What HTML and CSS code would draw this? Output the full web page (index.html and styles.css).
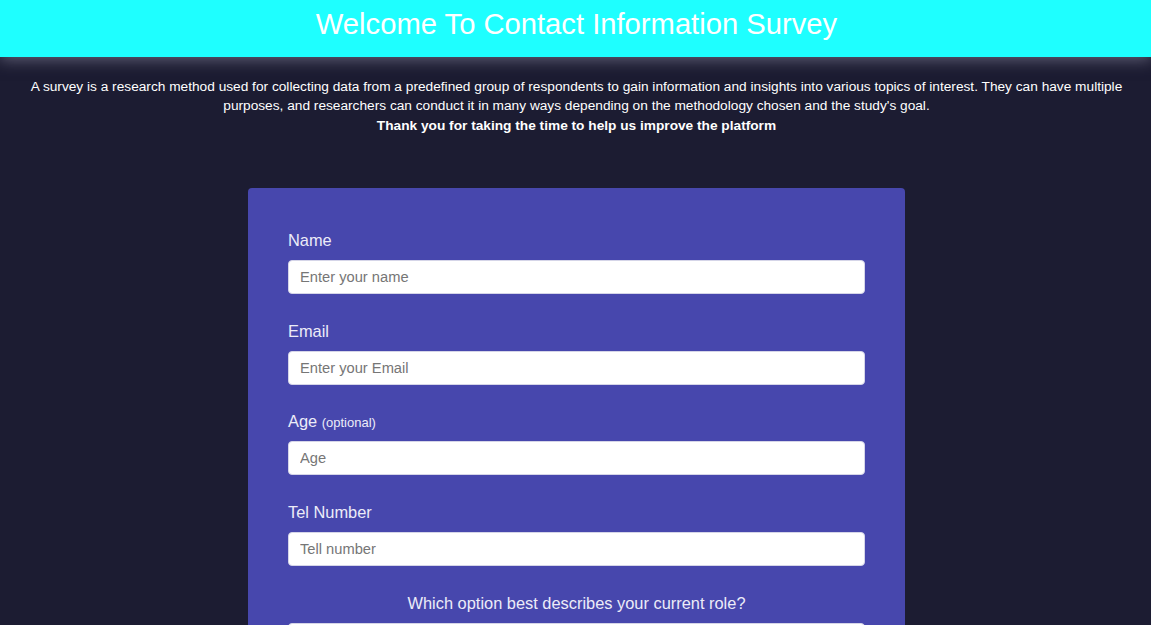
FILE: index.html
```html
<!DOCTYPE html>
<html lang="en">
<head>
<meta charset="utf-8">
<title>Contact Information Survey</title>
<link rel="stylesheet" href="styles.css">
</head>
<body>
<header class="top">
  <h1 class="title">Welcome To Contact Information Survey</h1>
</header>
<main class="page">
  <p class="intro">A survey is a research method used for collecting data from a predefined group of respondents to gain information and insights into various topics of interest. They can have multiple purposes, and researchers can conduct it in many ways depending on the methodology chosen and the study's goal.<br><strong>Thank you for taking the time to help us improve the platform</strong></p>
  <form class="card">
    <div class="field">
      <label class="label" for="name">Name</label>
      <input class="input" id="name" type="text" placeholder="Enter your name">
    </div>
    <div class="field">
      <label class="label" for="email">Email</label>
      <input class="input" id="email" type="email" placeholder="Enter your Email">
    </div>
    <div class="field">
      <label class="label" for="age">Age <span class="opt">(optional)</span></label>
      <input class="input" id="age" type="number" placeholder="Age">
    </div>
    <div class="field">
      <label class="label" for="tel">Tel Number</label>
      <input class="input" id="tel" type="tel" placeholder="Tell number">
    </div>
    <div class="field">
      <label class="label center" for="role">Which option best describes your current role?</label>
      <select class="input" id="role">
        <option>Select current role</option>
      </select>
    </div>
  </form>
</main>
</body>
</html>
```

FILE: styles.css
```css
* { box-sizing: border-box; }
html, body {
  margin: 0;
  padding: 0;
}
body {
  background: #1c1c32;
  font-family: "Liberation Sans", Arial, sans-serif;
  color: #ffffff;
  min-height: 100vh;
}
.top {
  background: #1effff;
  height: 57px;
  display: flex;
  align-items: center;
  justify-content: center;
  box-shadow: 0 3px 14px rgba(150, 150, 170, 0.55);
  position: relative;
}
.title {
  margin: 0;
  font-size: 29.2px;
  font-weight: 400;
  color: #ffffff;
  line-height: 1;
  padding-bottom: 8px;
  padding-left: 2px;
}
.page {
  display: flex;
  flex-direction: column;
  align-items: center;
  padding: 0 20px 0 22px;
}
.intro {
  margin: 20px 0 0;
  font-size: 13.7px;
  line-height: 19.3px;
  text-align: center;
  color: #ffffff;
}
.intro strong {
  font-weight: 700;
}
.card {
  margin-top: 53px;
  width: 657px;
  background: #4747ad;
  border-radius: 4px;
  padding: 42px 40px 40px;
  display: flex;
  flex-direction: column;
  gap: 26.75px;
}
.field {
  display: flex;
  flex-direction: column;
  gap: 10px;
}
.label {
  display: block;
  font-size: 16.4px;
  line-height: 20px;
  height: 20px;
  color: #ececf8;
}
.label.center {
  text-align: center;
}
.opt {
  font-size: 13px;
  line-height: 1;
}
.input {
  width: 100%;
  height: 34px;
  border: 1px solid #d5d5e8;
  border-radius: 4px;
  background: #ffffff;
  padding: 0 11px;
  font-family: "Liberation Sans", Arial, sans-serif;
  font-size: 14.7px;
  color: #333;
  appearance: none;
  -moz-appearance: textfield;
}
.input::placeholder {
  color: #767676;
}
```
